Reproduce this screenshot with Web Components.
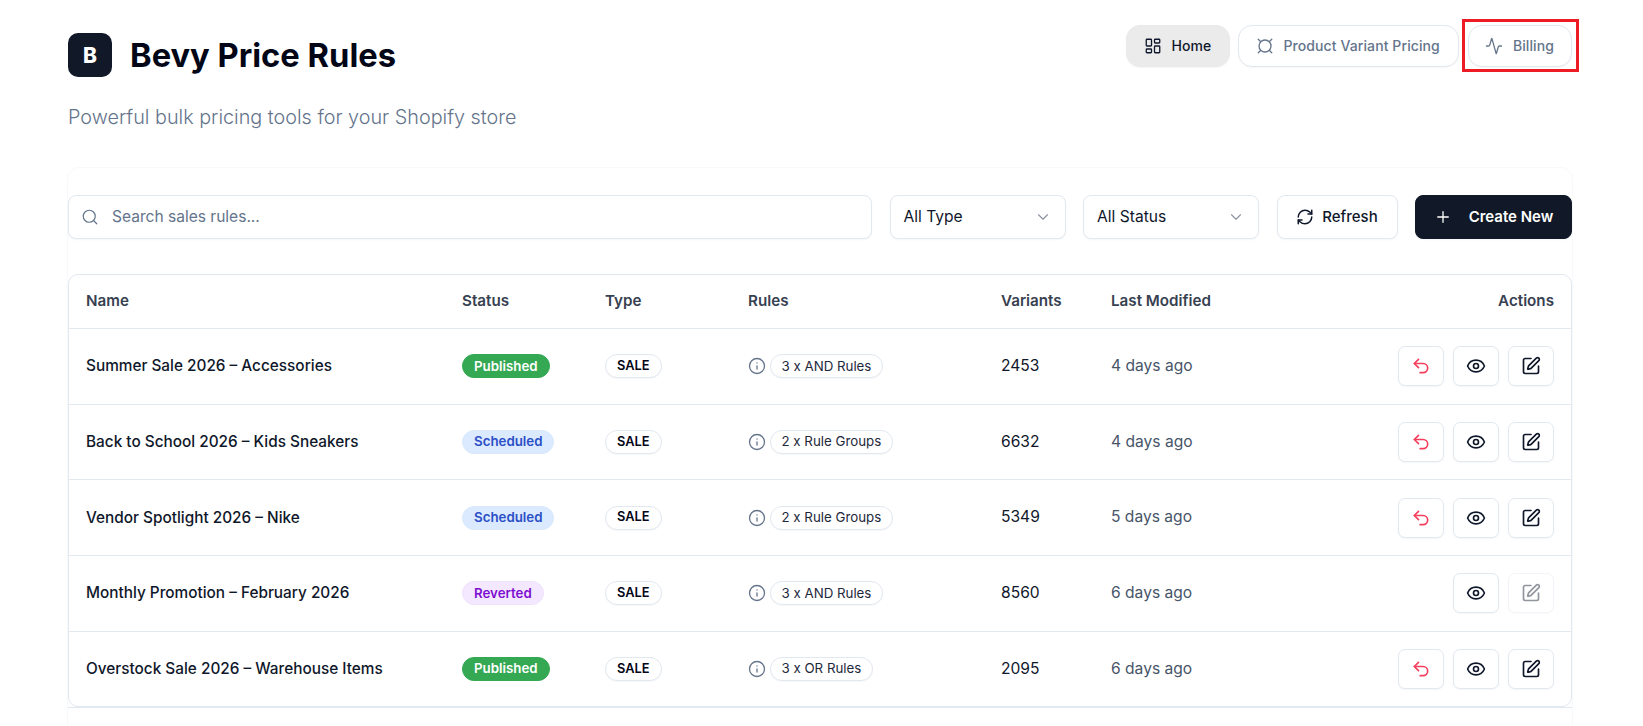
<!DOCTYPE html>
<html lang="en"><head><meta charset="utf-8"><title>Bevy Price Rules</title>
<style>
html,body{margin:0;padding:0;background:#fff;height:100%;overflow:hidden}
body{font-family:Inter,"Liberation Sans",sans-serif;color:#0f172a}
</style></head><body>
<bevy-app></bevy-app>
<script>
const ICONS={
 home:'<rect x="3" y="3" width="7" height="9" rx="1"/><rect x="14" y="3" width="7" height="5" rx="1"/><rect x="14" y="12" width="7" height="9" rx="1"/><rect x="3" y="16" width="7" height="5" rx="1"/>',
 currency:'<circle cx="12" cy="12" r="8"/><line x1="3" y1="3" x2="6" y2="6"/><line x1="21" y1="3" x2="18" y2="6"/><line x1="3" y1="21" x2="6" y2="18"/><line x1="21" y1="21" x2="18" y2="18"/>',
 activity:'<path d="M22 12h-2.48a2 2 0 0 0-1.93 1.46l-2.35 8.36a.25.25 0 0 1-.48 0L9.24 2.18a.25.25 0 0 0-.48 0l-2.35 8.36A2 2 0 0 1 4.49 12H2"/>',
 search:'<circle cx="11" cy="11" r="8"/><path d="m21 21-4.3-4.3"/>',
 chevron:'<path d="m6 9 6 6 6-6"/>',
 refresh:'<path d="M3 12a9 9 0 0 1 9-9 9.75 9.75 0 0 1 6.74 2.74L21 8"/><path d="M21 3v5h-5"/><path d="M21 12a9 9 0 0 1-9 9 9.75 9.75 0 0 1-6.74-2.74L3 16"/><path d="M8 16H3v5"/>',
 plus:'<path d="M5 12h14"/><path d="M12 5v14"/>',
 info:'<circle cx="12" cy="12" r="10"/><path d="M12 16v-4"/><path d="M12 8h.01"/>',
 undo:'<path d="M9 14 4 9l5-5"/><path d="M4 9h10.5a5.5 5.5 0 0 1 5.5 5.5 5.5 5.5 0 0 1-5.5 5.5H11"/>',
 eye:'<path d="M2.06 12.35a1 1 0 0 1 0-.7 10.75 10.75 0 0 1 19.88 0 1 1 0 0 1 0 .7 10.75 10.75 0 0 1-19.88 0"/><circle cx="12" cy="12" r="3"/>',
 edit:'<path d="M12 3H5a2 2 0 0 0-2 2v14a2 2 0 0 0 2 2h14a2 2 0 0 0 2-2v-7"/><path d="M18.38 2.63a2.12 2.12 0 1 1 3 3L12.36 14.64a2 2 0 0 1-.85.51l-2.87.84a.5.5 0 0 1-.62-.62l.84-2.87a2 2 0 0 1 .51-.85z"/>'
};
class BIcon extends HTMLElement{
 connectedCallback(){
  const s=this.getAttribute('size')||18,w=this.getAttribute('stroke')||2;
  this.attachShadow({mode:'open'}).innerHTML=`<style>:host{display:inline-flex;flex:none}svg{display:block}</style><svg xmlns="http://www.w3.org/2000/svg" width="${s}" height="${s}" viewBox="0 0 24 24" fill="none" stroke="currentColor" stroke-width="${w}" stroke-linecap="round" stroke-linejoin="round">${ICONS[this.getAttribute('name')]}</svg>`;
 }
}
customElements.define('b-icon',BIcon);

class NavPill extends HTMLElement{
 connectedCallback(){
  const active=this.hasAttribute('active');
  this.attachShadow({mode:'open'}).innerHTML=`<style>
  :host{display:inline-flex;align-items:center;gap:9px;height:42px;box-sizing:border-box;padding:0 18px 0 17px;border-radius:14px;font:500 14px/1 Inter,sans-serif;letter-spacing:.1px;
   border:1px solid ${active?'#e9eaec':'#e2e8f0'};background:${active?'#ebebec':'#fff'};color:${active?'#0f172a':'#64748b'};box-shadow:0 1px 2px rgba(15,23,42,.04)}
  </style><b-icon name="${this.getAttribute('icon')}" size="18" stroke="1.75"></b-icon><slot></slot>`;
 }
}
customElements.define('nav-pill',NavPill);

class AppHeader extends HTMLElement{
 connectedCallback(){
  this.attachShadow({mode:'open'}).innerHTML=`<style>
  :host{display:flex;justify-content:space-between;align-items:flex-start;height:167px;box-sizing:border-box;padding:25px 0 0 1px}
  .brand{display:flex;align-items:center;gap:18px;margin-top:8px}
  .logo{width:44px;height:44px;border-radius:10px;background:#111827;color:#fff;display:flex;align-items:center;justify-content:center;font:800 21px/1 Inter,sans-serif}
  h1{margin:0;font:700 32.7px/44px Inter,sans-serif;color:#020617}
  p{margin:25px 0 0;font:300 19.8px/30px Inter,sans-serif;color:#64748b}
  nav{display:flex;gap:8px;margin-right:1px}
  .mark{position:relative;display:inline-flex;margin-left:1px}
  .mark nav-pill{padding:0 17px 0 16px;gap:10px}
  .mark::after{content:"";position:absolute;left:-6px;right:-7px;top:-6px;bottom:-5px;border:3px solid #ed1c24;pointer-events:none}
  </style><div><div class="brand"><div class="logo">B</div><h1>Bevy Price Rules</h1></div><p>Powerful bulk pricing tools for your Shopify store</p></div>
  <nav><nav-pill icon="home" active>Home</nav-pill><nav-pill icon="currency">Product Variant Pricing</nav-pill><span class="mark"><nav-pill icon="activity">Billing</nav-pill></span></nav>`;
 }
}
customElements.define('app-header',AppHeader);

class SearchBox extends HTMLElement{
 connectedCallback(){
  this.attachShadow({mode:'open'}).innerHTML=`<style>
  :host{flex:1;display:flex;align-items:center;gap:13px;height:44px;box-sizing:border-box;padding:0 12px;border:1px solid #e2e8f0;border-radius:8px;background:#fff;color:#64748b;font:400 15.55px/1 Inter,sans-serif;box-shadow:0 1px 2px rgba(15,23,42,.04)}
  span{position:relative;top:-.5px}
  </style><b-icon name="search" size="18" stroke="1.6"></b-icon><span><slot></slot></span>`;
 }
}
customElements.define('search-box',SearchBox);

class SelectBox extends HTMLElement{
 connectedCallback(){
  this.attachShadow({mode:'open'}).innerHTML=`<style>
  :host{display:flex;align-items:center;justify-content:space-between;width:176px;height:44px;box-sizing:border-box;padding:0 13px;border:1px solid #e2e8f0;border-radius:8px;background:#fff;color:#0f172a;font:400 15.6px/1 Inter,sans-serif;box-shadow:0 1px 2px rgba(15,23,42,.04)}
  b-icon{color:#8a93a3}
  </style><slot></slot><b-icon name="chevron" size="18" stroke="1.5"></b-icon>`;
 }
}
customElements.define('select-box',SelectBox);

class ActionBtn extends HTMLElement{
 connectedCallback(){
  const dark=this.hasAttribute('dark');
  this.attachShadow({mode:'open'}).innerHTML=`<style>
  :host{display:flex;align-items:center;justify-content:center;gap:${dark?'17px':'8px'};height:44px;box-sizing:border-box;width:${dark?'157px':'121px'};border-radius:8px;font:${dark?600:500} 15px/1 Inter,sans-serif;
  border:1px solid ${dark?'#111827':'#e2e8f0'};background:${dark?'#111827':'#fff'};color:${dark?'#fff':'#0f172a'};box-shadow:0 1px 2px rgba(15,23,42,.04)}
  span{position:relative;top:-.5px}
  </style><b-icon name="${this.getAttribute('icon')}" size="18" stroke="${dark?1.75:2}"></b-icon><span><slot></slot></span>`;
 }
}
customElements.define('action-btn',ActionBtn);

class ToolBar extends HTMLElement{
 connectedCallback(){
  this.attachShadow({mode:'open'}).innerHTML=`<style>
  :host{display:flex;align-items:center;gap:17.5px;height:106px;box-sizing:border-box;padding:27px 0 35px}
  </style><slot></slot>`;
 }
}
customElements.define('tool-bar',ToolBar);

class StatusBadge extends HTMLElement{
 connectedCallback(){
  const c={Published:['#34a853','#34a853','#fff'],Scheduled:['#dbeafe','#dbe8fb','#2b4fc7'],Reverted:['#f3e8ff','#efe3fb','#7e0fd0']}[this.textContent.trim()];
  this.attachShadow({mode:'open'}).innerHTML=`<style>
  :host{display:inline-flex;align-items:center;height:24px;box-sizing:border-box;padding:0 11px;border-radius:12px;background:${c[0]};border:1px solid ${c[1]};color:${c[2]};font:600 13.3px/1 Inter,sans-serif}
  </style><slot></slot>`;
 }
}
customElements.define('status-badge',StatusBadge);

class OutlineChip extends HTMLElement{
 connectedCallback(){
  const strong=this.hasAttribute('strong');
  this.attachShadow({mode:'open'}).innerHTML=`<style>
  :host{display:inline-flex;align-items:center;height:24px;box-sizing:border-box;padding:0 ${strong?11:10.5}px;border-radius:12px;background:#fff;border:1px solid #e2e8f0;color:${strong?'#020617':'#1e293b'};font:${strong?'600 12.8px':'400 13.3px'}/1 Inter,sans-serif;box-shadow:0 1px 1px rgba(15,23,42,.03)}
  </style><slot></slot>`;
 }
}
customElements.define('outline-chip',OutlineChip);

class IconBtn extends HTMLElement{
 connectedCallback(){
  const kind=this.getAttribute('kind');
  const col={undo:'#f43f5e',eye:'#0f172a',edit:'#0f172a'}[kind];
  const off=this.hasAttribute('disabled');
  this.attachShadow({mode:'open'}).innerHTML=`<style>
  :host{display:flex;align-items:center;justify-content:center;width:46px;height:40px;box-sizing:border-box;border:1px solid #e2e8f0;border-radius:7px;background:#fff;color:${col};opacity:${off?.45:1};box-shadow:0 1px 2px rgba(15,23,42,.04)}
  </style><b-icon name="${kind}" size="20" stroke="2"></b-icon>`;
 }
}
customElements.define('icon-btn',IconBtn);

const COLS='376px 143px 143px 253px 110px 1fr 200px';
class RuleRow extends HTMLElement{
 connectedCallback(){
  const a=k=>this.getAttribute(k);
  const revert=a('status')!=='Reverted';
  this.attachShadow({mode:'open'}).innerHTML=`<style>
  :host{display:grid;grid-template-columns:${COLS};align-items:center;height:75.7px;box-sizing:border-box;padding:0 17px;border-top:1px solid #e2e8f0;font:400 15.35px/1 Inter,sans-serif;color:#0f172a}
  .name{font-weight:500;margin-top:-1px}
  .rules{display:flex;align-items:center;gap:4px;color:#64748b}
  .var{margin-top:-1px;font-size:15.6px}
  .mod{color:#475569;font-size:15.6px;margin-top:-1px}
  .acts{display:flex;justify-content:flex-end;gap:9px}
  </style>
  <div class="name">${a('name')}</div>
  <div><status-badge>${a('status')}</status-badge></div>
  <div><outline-chip strong>SALE</outline-chip></div>
  <div class="rules"><b-icon name="info" size="18" stroke="1.75"></b-icon><outline-chip>${a('rules')}</outline-chip></div>
  <div class="var">${a('variants')}</div>
  <div class="mod">${a('mod')}</div>
  <div class="acts">${revert?'<icon-btn kind="undo"></icon-btn>':''}<icon-btn kind="eye"></icon-btn><icon-btn kind="edit"${revert?'':' disabled'}></icon-btn></div>`;
 }
}
customElements.define('rule-row',RuleRow);

class RuleTable extends HTMLElement{
 connectedCallback(){
  this.attachShadow({mode:'open'}).innerHTML=`<style>
  :host{display:block;border:1px solid #e2e8f0;border-radius:10px;background:#fff;overflow:hidden}
  .head{display:grid;grid-template-columns:${COLS};align-items:center;height:53px;box-sizing:border-box;padding:0 17px 1px;font:600 15.2px/1 Inter,sans-serif;color:#374151}
  .r{text-align:right}
  </style><div class="head"><div>Name</div><div>Status</div><div>Type</div><div>Rules</div><div>Variants</div><div>Last Modified</div><div class="r">Actions</div></div><slot></slot>`;
 }
}
customElements.define('rule-table',RuleTable);

class MainCard extends HTMLElement{
 connectedCallback(){
  this.attachShadow({mode:'open'}).innerHTML=`<style>
  :host{display:block;border:1px solid #f8f9fb;border-radius:12px;background:#fff}
  .foot{height:40px;border-top:1px solid #e2e8f0}
  </style><slot></slot><div class="foot"></div>`;
 }
}
customElements.define('main-card',MainCard);

class BevyApp extends HTMLElement{
 connectedCallback(){
  this.attachShadow({mode:'open'}).innerHTML=`<style>
  :host{display:block;padding:0 70px 0 67px}
  </style>
  <app-header></app-header>
  <main-card>
  <tool-bar><search-box>Search sales rules...</search-box><select-box>All Type</select-box><select-box>All Status</select-box><action-btn icon="refresh">Refresh</action-btn><action-btn icon="plus" dark>Create New</action-btn></tool-bar>
  <rule-table>
   <rule-row name="Summer Sale 2026 – Accessories" status="Published" rules="3 x AND Rules" variants="2453" mod="4 days ago"></rule-row>
   <rule-row name="Back to School 2026 – Kids Sneakers" status="Scheduled" rules="2 x Rule Groups" variants="6632" mod="4 days ago"></rule-row>
   <rule-row name="Vendor Spotlight 2026 – Nike" status="Scheduled" rules="2 x Rule Groups" variants="5349" mod="5 days ago"></rule-row>
   <rule-row name="Monthly Promotion – February 2026" status="Reverted" rules="3 x AND Rules" variants="8560" mod="6 days ago"></rule-row>
   <rule-row name="Overstock Sale 2026 – Warehouse Items" status="Published" rules="3 x OR Rules" variants="2095" mod="6 days ago"></rule-row>
  </rule-table>
  </main-card>`;
 }
}
customElements.define('bevy-app',BevyApp);
</script></body></html>
